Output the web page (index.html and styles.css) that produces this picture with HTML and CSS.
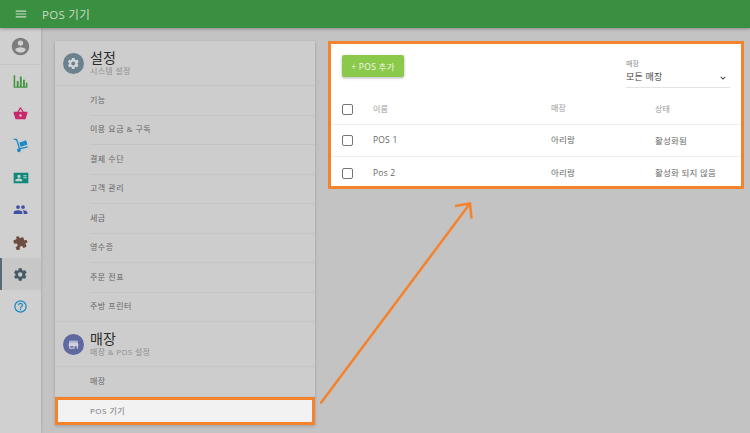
FILE: index.html
```html
<!DOCTYPE html>
<html lang="ko">
<head>
<meta charset="utf-8">
<title>POS 기기</title>
<link rel="stylesheet" href="styles.css">
</head>
<body>
<header class="topbar">
  <svg class="menu-icon" viewBox="0 0 24 24"><path d="M3 18h18v-2H3v2zm0-5h18v-2H3v2zm0-7v2h18V6H3z"/></svg>
  <h1 class="page-title">POS 기기</h1>
</header>
<div class="main">
  <nav class="sidebar">
    <div class="side-profile">
      <svg class="side-icon avatar" viewBox="0 0 24 24"><path fill="#7c7c7c" d="M12 2a10 10 0 1 0 0 20 10 10 0 0 0 0-20zm0 3a3 3 0 1 1 0 6.200A3 3 0 0 1 12 5zm0 14.200a7.200 7.200 0 0 1-6-3.200c0-2 4-3.100 6-3.100s6 1.100 6 3.100a7.200 7.200 0 0 1-6 3.200z"/></svg>
    </div>
    <a class="side-item"><svg class="side-icon" viewBox="0 0 24 24"><path fill="#43963f" d="M1 2h2.500v18H23v2H1zM6 11h3v9H6zM11 4h3v16h-3zM16 9h3v11h-3zM20.500 14H23v6h-2.500z"/></svg></a>
    <a class="side-item"><svg class="side-icon" viewBox="0 0 24 24"><path fill="#c8286b" d="M17.200 9l-4.400-6.500a1 1 0 0 0-1.600 0L6.800 9H1v2.500L4 21h16l3-9.500V9zM9 9l3-4.400L15 9zm3 8a2 2 0 1 1 0-4 2 2 0 0 1 0 4z"/></svg></a>
    <a class="side-item"><svg class="side-icon" viewBox="0 0 24 24"><path fill="#1c88c4" d="M1 1h5.500l4.700 15 12-3 .5 2-11.600 3a3 3 0 1 1-3-1.500L5 3H1zM10 7l6-1.500 2 7-6 1.500zM16 5l5-1.300 2 7-5 1.300z"/></svg></a>
    <a class="side-item"><svg class="side-icon wide" viewBox="0 0 24 24"><path fill="#0d8a7a" fill-rule="evenodd" d="M1 4h22v16H1zm8 3a2.500 2.500 0 1 0 0 5 2.500 2.500 0 0 0 0-5zm-5.500 10H14v-1.500c0-1.800-3.300-2.700-5-2.700s-5.500.9-5.500 2.700zM15.500 8v1.500h5V8zm0 3v1.500h5V11z"/></svg></a>
    <a class="side-item"><svg class="side-icon" viewBox="0 0 24 24"><path fill="#3f51a5" d="M16 11a3 3 0 1 0 0-6 3 3 0 0 0 0 6zm-8 0a3 3 0 1 0 0-6 3 3 0 0 0 0 6zm0 2c-2.300 0-7 1.200-7 3.500V19h14v-2.500C15 14.200 10.300 13 8 13zm8 0h-1c1.200.9 2 2 2 3.500V19h6v-2.500c0-2.300-4.700-3.500-7-3.500z"/></svg></a>
    <a class="side-item"><svg class="side-icon" viewBox="0 0 24 24"><path fill="#6d4c41" transform="rotate(-20 12 12)" d="M20.500 11H19V7a2 2 0 0 0-2-2h-4V3.500a2.500 2.500 0 0 0-5 0V5H4a2 2 0 0 0-2 2v3.800h1.500a2.700 2.700 0 0 1 0 5.400H2V20a2 2 0 0 0 2 2h3.800v-1.500a2.700 2.700 0 0 1 5.400 0V22H17a2 2 0 0 0 2-2v-4h1.500a2.500 2.500 0 0 0 0-5z"/></svg></a>
    <a class="side-item active"><svg class="side-icon" viewBox="0 0 24 24"><path fill="#455a64" d="M19.400 13a7.500 7.500 0 0 0 0-2l2.100-1.600a.5.500 0 0 0 .1-.6l-2-3.500a.5.500 0 0 0-.6-.2l-2.500 1a7.300 7.300 0 0 0-1.700-1L14 2.400a.5.500 0 0 0-.5-.4h-4a.5.500 0 0 0-.5.400l-.4 2.700a7.300 7.300 0 0 0-1.700 1l-2.500-1a.5.500 0 0 0-.6.200l-2 3.500a.5.500 0 0 0 .1.600L4 11a7.500 7.500 0 0 0 0 2l-2.100 1.600a.5.500 0 0 0-.1.600l2 3.500c.1.200.4.300.6.200l2.500-1c.5.400 1.100.7 1.700 1l.4 2.700c0 .2.300.4.500.4h4c.2 0 .5-.2.500-.4l.4-2.700c.6-.3 1.200-.6 1.700-1l2.500 1c.2.100.5 0 .6-.2l2-3.500a.5.500 0 0 0-.1-.6zM11.500 15.500a3.500 3.500 0 1 1 0-7 3.500 3.500 0 0 1 0 7z"/></svg></a>
    <a class="side-item"><svg class="side-icon" viewBox="0 0 24 24"><path fill="#1c88c4" d="M11 18h2v-2h-2zm1-16a10 10 0 1 0 0 20 10 10 0 0 0 0-20zm0 18a8 8 0 1 1 0-16 8 8 0 0 1 0 16zm0-14a4 4 0 0 0-4 4h2a2 2 0 1 1 4 0c0 2-3 1.750-3 5h2c0-2.250 3-2.500 3-5a4 4 0 0 0-4-4z"/></svg></a>
  </nav>
  <div class="content">
    <section class="settings-card">
      <div class="group-head">
        <span class="group-badge slate"><svg viewBox="0 0 24 24"><path fill="#cfd4d7" d="M19.400 13a7.500 7.500 0 0 0 0-2l2.100-1.600a.5.500 0 0 0 .1-.6l-2-3.500a.5.500 0 0 0-.6-.2l-2.500 1a7.300 7.300 0 0 0-1.700-1L14 2.400a.5.500 0 0 0-.5-.4h-4a.5.500 0 0 0-.5.400l-.4 2.700a7.300 7.300 0 0 0-1.700 1l-2.500-1a.5.500 0 0 0-.6.200l-2 3.500a.5.500 0 0 0 .1.600L4 11a7.500 7.500 0 0 0 0 2l-2.100 1.600a.5.500 0 0 0-.1.600l2 3.500c.1.200.4.300.6.200l2.500-1c.5.400 1.100.7 1.700 1l.4 2.700c0 .2.300.4.500.4h4c.2 0 .5-.2.500-.4l.4-2.700c.6-.3 1.200-.6 1.700-1l2.500 1c.2.100.5 0 .6-.2l2-3.500a.5.500 0 0 0-.1-.6zM11.500 15.500a3.500 3.500 0 1 1 0-7 3.500 3.500 0 0 1 0 7z"/></svg></span>
        <div class="group-text"><div class="group-title">설정</div><div class="group-sub">시스템 설정</div></div>
      </div>
      <a class="set-row">기능</a>
      <a class="set-row">이용 요금 &amp; 구독</a>
      <a class="set-row">결제 수단</a>
      <a class="set-row">고객 관리</a>
      <a class="set-row">세금</a>
      <a class="set-row">영수증</a>
      <a class="set-row">주문 전표</a>
      <a class="set-row last">주방 프린터</a>
      <div class="group-head">
        <span class="group-badge indigo"><svg viewBox="0 0 24 24"><path fill="#cfd1e0" d="M4 5h16v2H4zm16 3H4l-1 5v2h1v5h10v-5h4v5h2v-5h1v-2zM12 18H6v-3h6z"/></svg></span>
        <div class="group-text"><div class="group-title">매장</div><div class="group-sub">매장 &amp; POS 설정</div></div>
      </div>
      <a class="set-row last">매장</a>
      <a class="set-row selected">POS 기기</a>
    </section>
    <section class="pos-card">
      <div class="toolbar">
        <button class="add-btn">+ POS 추가</button>
        <div class="store-select">
          <div class="select-label">매장</div>
          <div class="select-value"><span>모든 매장</span><svg class="chevron" viewBox="0 0 24 24"><path d="M7.400 8.600 12 13.200l4.600-4.600L18 10l-6 6-6-6z"/></svg></div>
        </div>
      </div>
      <div class="t-row t-head">
        <span class="box"></span><span class="c-name">이름</span><span class="c-store">매장</span><span class="c-state">상태</span>
      </div>
      <div class="t-row">
        <span class="box"></span><span class="c-name">POS 1</span><span class="c-store">아리랑</span><span class="c-state">활성화됨</span>
      </div>
      <div class="t-row no-line">
        <span class="box"></span><span class="c-name">Pos 2</span><span class="c-store">아리랑</span><span class="c-state">활성화 되지 않음</span>
      </div>
    </section>
  </div>
</div>
<svg class="arrow" viewBox="0 0 750 433"><path d="M320.500 403.500 470 203.500M455 206l15-2.500 1.500 15" fill="none" stroke="#f5822d" stroke-width="2.500"/></svg>
</body>
</html>
```
FILE: styles.css
```css
* { box-sizing: border-box; }
html, body { margin: 0; height: 100%; }
body {
  width: 750px; height: 433px; overflow: hidden; position: relative;
  background: #c3c3c3; display: flex; flex-direction: column;
  font-family: "Open Sans", "Noto Sans CJK KR", sans-serif; color: #555;
}
.topbar {
  height: 28px; flex: none; background: #3a8f40; display: flex; align-items: center;
  padding-left: 14px; box-shadow: 0 1px 3px rgba(0,0,0,.3); position: relative; z-index: 2;
}
.menu-icon { width: 14px; height: 14px; fill: #c9dcc9; }
.page-title { margin: 0 0 0 14px; font-size: 11.500px; font-weight: 400; color: #c8dcc9; letter-spacing: .3px; }
.main { flex: 1; display: flex; min-height: 0; }
.sidebar { width: 41px; flex: none; background: #d0d0d0; box-shadow: 1px 0 2px rgba(0,0,0,.1); }
.side-profile { height: 37px; border-bottom: 1px solid #c4c4c4; display: flex; align-items: center; justify-content: center; }
.side-icon { width: 15px; height: 15px; display: block; }
.side-icon.wide { width: 16px; height: 16px; }
.avatar { width: 21px; height: 21px; }
.side-item { height: 32.200px; display: flex; align-items: center; justify-content: center; }
.side-item.active { background: #c7c7c7; border-left: 2px solid #546a76; padding-right: 2px; }
.content { flex: 1; display: flex; align-items: flex-start; gap: 13px; padding: 13px 6px 0 14px; }
.settings-card { width: 260px; flex: none; background: #cdcdcd; box-shadow: 0 1px 3px rgba(0,0,0,.2); }
.group-head { height: 45px; display: flex; align-items: center; padding-left: 8px; border-bottom: 1px solid #c4c4c4; }
.group-badge { width: 21px; height: 21px; border-radius: 50%; display: flex; align-items: center; justify-content: center; }
.group-badge svg { width: 13px; height: 13px; }
.slate { background: #6b818e; }
.indigo { background: #5f689f; }
.group-text { margin-left: 6px; margin-top: -1px; }
.group-title { font-size: 14px; line-height: 15px; color: #2c2c2c; }
.group-sub { font-size: 8px; line-height: 9px; margin-top: 1px; color: #8f8f8f; letter-spacing: .3px; }
.set-row {
  display: flex; align-items: center; height: 29.500px; margin-left: 35px; padding-bottom: 2px; font-size: 8px;
  color: #666; border-bottom: 1px solid #c4c4c4; letter-spacing: .5px;
}
.set-row.last { margin-left: 0; padding-left: 35px; }
.set-row.selected {
  margin: 0; padding: 0 0 1px 32px; height: 28px; background: #f2f2f2; border: 3px solid #f5822d; color: #777;
}
.pos-card { width: 416px; height: 148px; flex: none; background: #fff; border: 3px solid #f5822d; padding: 11px 0 0; }
.toolbar { display: flex; justify-content: space-between; align-items: flex-start; padding: 0 11px; height: 42px; }
.add-btn {
  width: 62px; height: 22px; border: 0; border-radius: 2px; background: #8bc94a; color: #f2f8ea; padding: 0;
  font: 8.500px "Open Sans", "Noto Sans CJK KR", sans-serif; letter-spacing: .3px; box-shadow: 0 1px 3px rgba(0,0,0,.3);
}
.store-select { width: 104px; margin-top: 5px; border-bottom: 1px solid #e4e4e4; height: 28px; }
.select-label { font-size: 7px; line-height: 8px; color: #888; }
.select-value { display: flex; justify-content: space-between; align-items: center; font-size: 9px; line-height: 13px; color: #444; height: 14px; margin-top: 1px; letter-spacing: .2px; }
.chevron { width: 10px; height: 10px; margin: 3px 2px 0 0; fill: #333; }
.t-row { height: 32px; display: flex; align-items: center; padding-left: 11px; font-size: 8.500px; color: #666; border-bottom: 1px solid #eee; letter-spacing: .2px; }
.t-row.no-line { border-bottom: 0; }
.t-head { height: 28px; padding-bottom: 3px; font-size: 8px; color: #999; }
.box { width: 11px; height: 11px; border: 1.500px solid #757575; border-radius: 2px; flex: none; }
.c-name { margin-left: 20px; width: 178px; flex: none; padding-bottom: 2px; }
.c-store { width: 104px; flex: none; padding-bottom: 3px; }
.c-state { padding-bottom: 2px; }
.arrow { position: absolute; left: 0; top: 0; width: 750px; height: 433px; pointer-events: none; }
```
